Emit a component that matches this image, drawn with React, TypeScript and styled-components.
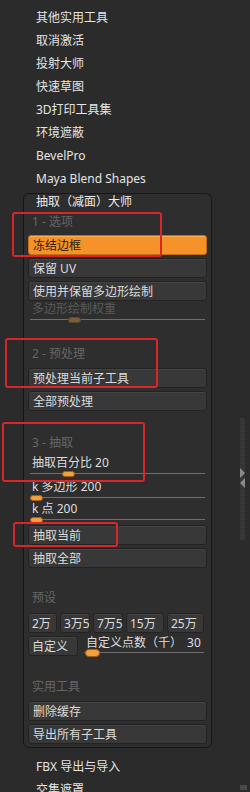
import React from 'react';
import styled, { createGlobalStyle } from 'styled-components';

const GlobalStyle = createGlobalStyle`
  body {
    margin: 0;
    background: #2b2b2b;
  }
`;

const topItems: Array<string> = [
  '其他实用工具',
  '取消激活',
  '投射大师',
  '快速草图',
  '3D打印工具集',
  '环境遮蔽',
  'BevelPro',
  'Maya Blend Shapes',
];

const presets: Array<{ label: string; width: number }> = [
  { label: '2万', width: 29 },
  { label: '3万5', width: 30 },
  { label: '7万5', width: 30 },
  { label: '15万', width: 38 },
  { label: '25万', width: 37 },
];

// 빨간 표시 박스 (스크린샷 위 주석)
const marks: Array<{ x: number; y: number; w: number; h: number }> = [
  { x: 12, y: 212, w: 150, h: 45 },
  { x: 5, y: 338, w: 153, h: 50 },
  { x: 2, y: 422, w: 143, h: 60 },
  { x: 13, y: 522, w: 105, h: 25 },
];

const App = () => {
  return (
    <Page>
      <GlobalStyle />
      <Menu $top={6}>
        {topItems.map((item) => (
          <MenuItem key={item}>{item}</MenuItem>
        ))}
      </Menu>

      <Panel>
        <PanelTitle>抽取（减面）大师</PanelTitle>

        <SectionLabel $mt={5}>1 - 选项</SectionLabel>
        <Button $mt={5} $active>
          冻结边框
        </Button>
        <Button $mt={3}>保留 UV</Button>
        <Button $mt={3}>使用并保留多边形绘制</Button>
        <Slider $mt={0}>
          <SliderLabel $dim>多边形绘制权重</SliderLabel>
          <Track>
            <Handle $left={38} $dim />
          </Track>
        </Slider>

        <SectionLabel $mt={23}>2 - 预处理</SectionLabel>
        <Button $mt={6}>预处理当前子工具</Button>
        <Button $mt={3}>全部预处理</Button>

        <SectionLabel $mt={24}>3 - 抽取</SectionLabel>
        <Slider $mt={4}>
          <SliderLabel>抽取百分比 20</SliderLabel>
          <Track>
            <Handle $left={32} />
          </Track>
        </Slider>
        <Slider $mt={2}>
          <SliderLabel>k 多边形 200</SliderLabel>
          <Track>
            <Handle $left={0} />
          </Track>
        </Slider>
        <Slider $mt={0}>
          <SliderLabel>k 点 200</SliderLabel>
          <Track>
            <Handle $left={0} />
          </Track>
        </Slider>
        <Button $mt={2}>抽取当前</Button>
        <Button $mt={3}>抽取全部</Button>

        <SectionLabel $mt={22}>预设</SectionLabel>
        <PresetRow>
          {presets.map((p) => (
            <PresetButton key={p.label} $w={p.width}>
              {p.label}
            </PresetButton>
          ))}
        </PresetRow>
        <CustomRow>
          <PresetButton $w={50}>自定义</PresetButton>
          <CustomSlider>
            <CustomLabel>
              <span>自定义点数（千）</span>
              <span>30</span>
            </CustomLabel>
            <Track>
              <Handle $left={1} $big />
            </Track>
          </CustomSlider>
        </CustomRow>

        <SectionLabel $mt={23}>实用工具</SectionLabel>
        <Button $mt={6}>删除缓存</Button>
        <Button $mt={3}>导出所有子工具</Button>
      </Panel>

      <Menu $top={7}>
        <MenuItem>FBX 导出与导入</MenuItem>
        <MenuItem>交集遮罩</MenuItem>
      </Menu>

      <ScrollRail>
        <Arrow $dir="right" />
        <Arrow $dir="left" />
      </ScrollRail>
      <Corner />

      {marks.map((m, i) => (
        <Mark key={i} style={{ left: m.x, top: m.y, width: m.w, height: m.h }} />
      ))}
    </Page>
  );
};

const Page = styled.div`
  position: relative;
  width: 250px;
  height: 792px;
  overflow: hidden;
  background: #2b2b2b;
  font-family: 'Noto Sans', 'Noto Sans CJK SC', sans-serif;
  font-size: 12px;
  color: #e4e4e4;
`;
const Menu = styled.div<{ $top: number }>`
  display: flex;
  flex-direction: column;
  padding: ${(p) => p.$top}px 0 0 36px;
`;
const MenuItem = styled.div`
  height: 23px;
  line-height: 23px;
  white-space: nowrap;
`;
const Panel = styled.div`
  margin: 3px 0 0 23px;
  width: 189px;
  box-sizing: border-box;
  border: 1px solid #161616;
  border-radius: 6px;
  background: #2e2e2e;
  padding: 0 4px 3px;
  display: flex;
  flex-direction: column;
`;
const PanelTitle = styled.div`
  height: 15px;
  line-height: 15px;
  padding-left: 8px;
  color: #ececec;
`;
const SectionLabel = styled.div<{ $mt: number }>`
  margin-top: ${(p) => p.$mt}px;
  height: 16px;
  line-height: 16px;
  padding-left: 4px;
  color: #666666;
`;
const Button = styled.div<{ $mt: number; $active?: boolean }>`
  margin-top: ${(p) => p.$mt}px;
  height: 20px;
  line-height: 19px;
  box-sizing: border-box;
  padding-left: 4px;
  border-radius: 3px;
  border: 1px solid ${(p) => (p.$active ? '#c56d10' : '#232323')};
  background: ${(p) => (p.$active ? '#f5922a' : '#383838')};
  box-shadow: inset 0 1px 0 ${(p) => (p.$active ? '#ffae55' : '#444444')};
  color: ${(p) => (p.$active ? '#2a1a08' : '#dcdcdc')};
  white-space: nowrap;
`;
const Slider = styled.div<{ $mt: number }>`
  margin-top: ${(p) => p.$mt}px;
  display: flex;
  flex-direction: column;
  padding: 0 2px;
`;
const SliderLabel = styled.div<{ $dim?: boolean }>`
  height: 16px;
  line-height: 16px;
  padding-left: 2px;
  color: ${(p) => (p.$dim ? '#5a5a5a' : '#dedede')};
  white-space: nowrap;
`;
const Track = styled.div`
  position: relative;
  height: 6px;
  &::before {
    content: '';
    position: absolute;
    left: 0;
    right: 0;
    top: 2px;
    height: 1px;
    background: #6e6e6e;
  }
`;
const Handle = styled.div<{ $left: number; $dim?: boolean; $big?: boolean }>`
  position: absolute;
  left: ${(p) => p.$left}px;
  top: ${(p) => (p.$big ? -1 : 0)}px;
  width: ${(p) => (p.$big ? 15 : 13)}px;
  height: ${(p) => (p.$big ? 8 : 6)}px;
  box-sizing: border-box;
  border-radius: 4px;
  border: 1px solid ${(p) => (p.$dim ? '#5e4630' : '#a85e12')};
  background: ${(p) => (p.$dim ? '#7c5d3c' : '#f3a13f')};
`;
const PresetRow = styled.div`
  margin-top: 7px;
  display: flex;
  gap: 3px;
`;
const PresetButton = styled.div<{ $w: number }>`
  width: ${(p) => p.$w}px;
  height: 20px;
  line-height: 19px;
  box-sizing: border-box;
  padding-left: 3px;
  border-radius: 3px;
  border: 1px solid #232323;
  background: #383838;
  box-shadow: inset 0 1px 0 #444444;
  color: #dcdcdc;
  white-space: nowrap;
`;
const CustomRow = styled.div`
  margin-top: 3px;
  display: flex;
  gap: 6px;
`;
const CustomSlider = styled.div`
  flex: 1;
  display: flex;
  flex-direction: column;
  padding-right: 3px;
`;
const CustomLabel = styled.div`
  height: 14px;
  line-height: 14px;
  display: flex;
  gap: 5px;
  padding-left: 2px;
  color: #dedede;
  white-space: nowrap;
`;
const ScrollRail = styled.div`
  position: absolute;
  left: 240px;
  top: 418px;
  width: 5px;
  height: 122px;
  background: repeating-linear-gradient(0deg, #3a3a3a 0 1px, #333333 1px 2px);
  display: flex;
  flex-direction: column;
  align-items: center;
  padding-top: 50px;
  box-sizing: border-box;
`;
const Arrow = styled.div<{ $dir: 'left' | 'right' }>`
  width: 0;
  height: 0;
  border-top: 5px solid transparent;
  border-bottom: 5px solid transparent;
  ${(p) =>
    p.$dir === 'right'
      ? 'border-left: 5px solid #8a8a8a;'
      : 'border-right: 5px solid #8a8a8a;'}
`;
const Corner = styled.div`
  position: absolute;
  left: 240px;
  top: 785px;
  width: 7px;
  height: 5px;
  background: #4a4a4a;
`;
const Mark = styled.div`
  position: absolute;
  box-sizing: border-box;
  border: 2px solid #d8262b;
  border-radius: 3px;
  pointer-events: none;
`;

export default App;
